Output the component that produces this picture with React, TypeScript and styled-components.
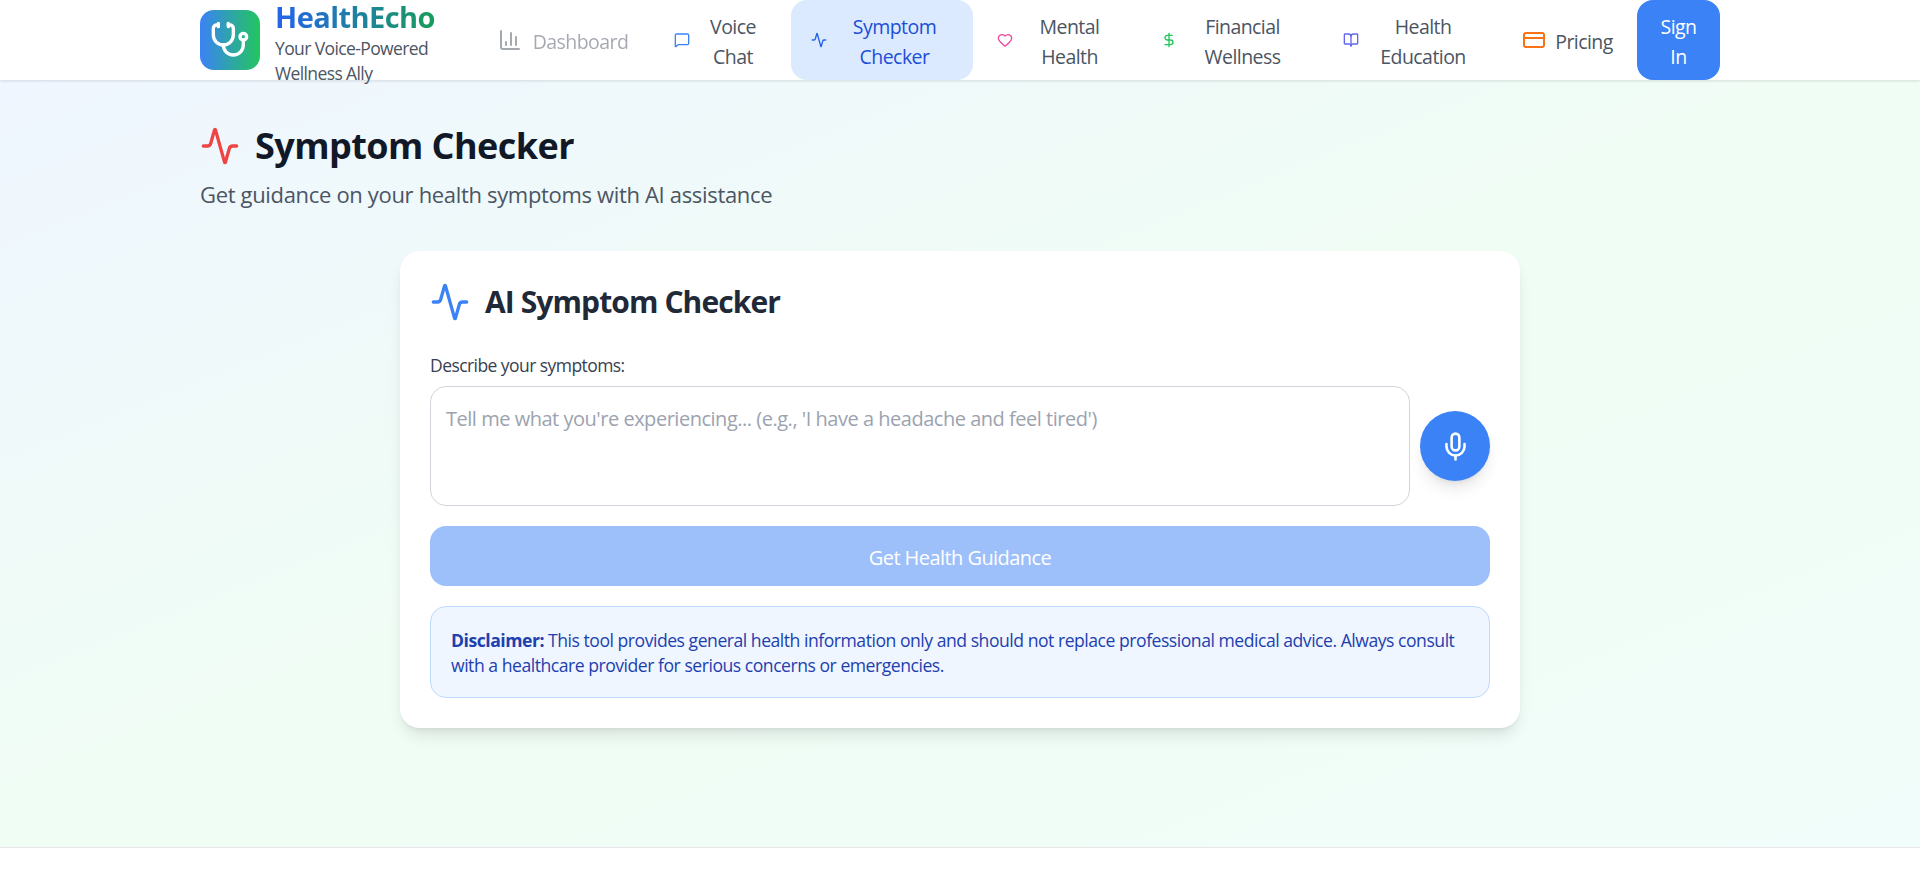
import { createGlobalStyle } from 'styled-components';
import styled from 'styled-components';
import { Activity, BookOpen, ChartColumn, CreditCard, DollarSign, Heart, MessageSquare, Mic, Stethoscope } from 'lucide-react';
import type { ReactNode } from 'react';

const GlobalStyle = createGlobalStyle`
  * {
    box-sizing: border-box;
  }
  body {
    margin: 0;
    font-family: "Open Sans", "Noto Sans", sans-serif;
    letter-spacing: -0.035em;
    color: #1f2937;
    background: white;
  }
`;

const Header = styled.header`
  height: 80px;
  background: white;
  box-shadow: 0 1px 3px rgba(0, 0, 0, 0.12);
  position: relative;
`;

const HeaderInner = styled.div`
  width: 1520px;
  height: 80px;
  margin: 0 auto;
  display: flex;
`;

const Brand = styled.div`
  width: 278px;
  display: flex;
  align-items: flex-start;
  gap: 15px;
  padding-top: 10px;
`;

const LogoBox = styled.div`
  width: 60px;
  height: 60px;
  flex-shrink: 0;
  border-radius: 14px;
  background: linear-gradient(90deg, #3b82f6, #22c55e);
  color: white;
  display: flex;
  align-items: center;
  justify-content: center;
`;

const BrandText = styled.div`
  margin-top: -10px;
`;

const BrandName = styled.div`
  font-size: 29px;
  font-weight: 700;
  line-height: 34px;
  background: linear-gradient(90deg, #2563eb, #16a34a);
  -webkit-background-clip: text;
  background-clip: text;
  color: transparent;
`;

const Tagline = styled.div`
  font-size: 17.5px;
  line-height: 25px;
  color: #4b5563;
  width: 178px;
  letter-spacing: -0.035em;
  padding-top: 2px;
`;

const Nav = styled.nav`
  display: flex;
  gap: 4px;
`;

const NavItem = styled.a<{ $width: number; $active?: boolean }>`
  width: ${(props) => props.$width}px;
  height: 80px;
  padding: 4px 20px 0;
  display: flex;
  align-items: center;
  gap: 9px;
  font-size: 19.5px;
  line-height: 30px;
  text-align: center;
  border-radius: 16px;
  color: ${(props) => (props.$active ? '#1d4ed8' : '#4b5563')};
  background: ${(props) => (props.$active ? '#dbeafe' : 'transparent')};
  svg {
    flex-shrink: 0;
    margin-top: -4px;
  }
`;

const DimNavItem = styled(NavItem)`
  opacity: 0.5;
`;

const NavLabel = styled.span`
  flex: 1;
`;

const SignIn = styled.button`
  width: 83px;
  height: 80px;
  border: 0;
  border-radius: 16px;
  background: #3b82f6;
  color: white;
  font: inherit;
  font-size: 19.5px;
  line-height: 30px;
  letter-spacing: inherit;
  padding: 4px 20px 0;
`;

const Main = styled.main`
  height: 768px;
  background: linear-gradient(to bottom right, #eff6ff, #f0fdf4, #f0fdfa);
  border-bottom: 1px solid #e5e7eb;
  padding-top: 40px;
`;

const Content = styled.div`
  width: 1520px;
  margin: 0 auto;
`;

const PageTitle = styled.h1`
  margin: 0;
  display: flex;
  align-items: center;
  gap: 15px;
  font-size: 36px;
  line-height: 52px;
  font-weight: 700;
  color: #111827;
`;

const PageSub = styled.p`
  margin: 7px 0 0;
  font-size: 22px;
  line-height: 30px;
  letter-spacing: -0.015em;
  color: #4b5563;
`;

const Card = styled.section`
  width: 1120px;
  height: 477px;
  margin: 42px auto 0;
  padding: 30px;
  border-radius: 20px;
  background: white;
  box-shadow: 0 10px 15px -3px rgba(0, 0, 0, 0.1), 0 4px 6px -4px rgba(0, 0, 0, 0.1);
`;

const CardTitle = styled.h2`
  margin: 0;
  display: flex;
  align-items: center;
  gap: 15px;
  font-size: 30px;
  line-height: 42px;
  font-weight: 700;
  letter-spacing: -0.03em;
  color: #1f2937;
`;

const FieldLabel = styled.label`
  display: block;
  margin-top: 30px;
  font-size: 17.5px;
  line-height: 24px;
  color: #374151;
`;

const InputRow = styled.div`
  display: flex;
  align-items: center;
  gap: 10px;
  margin-top: 9px;
`;

const SymptomInput = styled.textarea`
  flex: 1;
  height: 120px;
  resize: none;
  padding: 17px 15px;
  border: 1px solid #d1d5db;
  border-radius: 16px;
  font: inherit;
  font-size: 20px;
  line-height: 30px;
  letter-spacing: -0.48px;
  outline: none;
  &::placeholder {
    color: #9ca3af;
  }
`;

const MicButton = styled.button`
  width: 70px;
  height: 70px;
  border: 0;
  border-radius: 50%;
  background: #3b82f6;
  color: white;
  display: flex;
  align-items: center;
  justify-content: center;
  box-shadow: 0 10px 15px -3px rgba(0, 0, 0, 0.1), 0 4px 6px -4px rgba(0, 0, 0, 0.1);
`;

const SubmitButton = styled.button`
  display: block;
  width: 100%;
  height: 60px;
  margin-top: 20px;
  padding-top: 3px;
  border: 0;
  border-radius: 16px;
  background: #9dc0fa;
  color: white;
  font: inherit;
  font-size: 20px;
  letter-spacing: inherit;
`;

const Disclaimer = styled.div`
  margin-top: 20px;
  height: 92px;
  padding: 21px 20px 20px;
  border: 1px solid #bfdbfe;
  border-radius: 16px;
  background: #eff6ff;
  color: #1e40af;
  font-size: 17.6px;
  line-height: 25px;
  letter-spacing: -0.48px;
  strong {
    font-weight: 700;
  }
`;

const Footer = styled.footer`
  height: 30px;
  background: white;
`;

const links: { label: ReactNode; icon: ReactNode; width: number }[] = [
  { label: <>Voice Chat</>, icon: <MessageSquare size={16} color="#3b82f6" />, width: 133 },
  { label: <>Symptom Checker</>, icon: <Activity size={16} color="#2563eb" />, width: 182 },
  { label: <>Mental Health</>, icon: <Heart size={16} color="#ec4899" />, width: 160 },
  { label: <>Financial Wellness</>, icon: <DollarSign size={16} color="#22c55e" />, width: 178 },
  { label: <>Health Education</>, icon: <BookOpen size={16} color="#6366f1" />, width: 175 },
  { label: <>Pricing</>, icon: <CreditCard size={24} color="#f97316" />, width: 131 },
];

export default function App() {
  return (
    <>
      <GlobalStyle />
      <Header>
        <HeaderInner>
          <Brand>
            <LogoBox>
              <Stethoscope size={40} />
            </LogoBox>
            <BrandText>
              <BrandName>HealthEcho</BrandName>
              <Tagline>Your Voice-Powered Wellness Ally</Tagline>
            </BrandText>
          </Brand>
          <Nav>
            <DimNavItem $width={172}>
              <ChartColumn size={24} />
              <NavLabel>Dashboard</NavLabel>
            </DimNavItem>
            {links.map((link, i) => (
              <NavItem key={i} $width={link.width} $active={i === 1}>
                {link.icon}
                <NavLabel>{link.label}</NavLabel>
              </NavItem>
            ))}
            <SignIn>Sign In</SignIn>
          </Nav>
        </HeaderInner>
      </Header>
      <Main>
        <Content>
          <PageTitle>
            <Activity size={40} color="#ef4444" />
            Symptom Checker
          </PageTitle>
          <PageSub>Get guidance on your health symptoms with AI assistance</PageSub>
          <Card>
            <CardTitle>
              <Activity size={40} color="#3b82f6" />
              AI Symptom Checker
            </CardTitle>
            <FieldLabel>Describe your symptoms:</FieldLabel>
            <InputRow>
              <SymptomInput placeholder="Tell me what you're experiencing... (e.g., 'I have a headache and feel tired')" />
              <MicButton>
                <Mic size={31} />
              </MicButton>
            </InputRow>
            <SubmitButton>Get Health Guidance</SubmitButton>
            <Disclaimer>
              <strong>Disclaimer:</strong> This tool provides general health information only and should not replace professional medical advice. Always consult with a healthcare provider for serious concerns or emergencies.
            </Disclaimer>
          </Card>
        </Content>
      </Main>
      <Footer />
    </>
  );
}
